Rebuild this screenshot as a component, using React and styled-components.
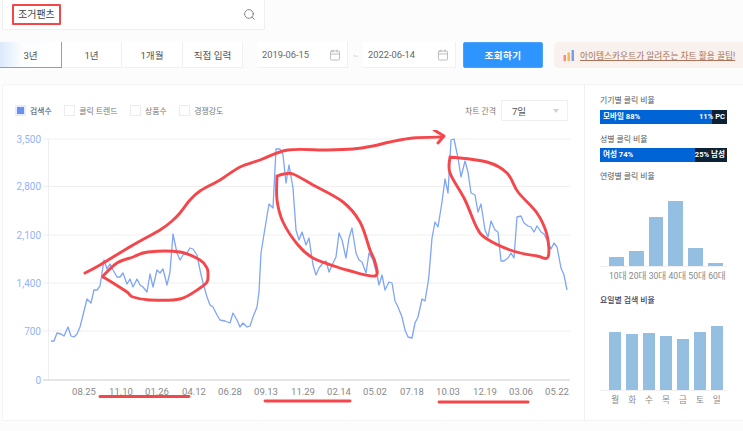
import styled, { createGlobalStyle } from "styled-components";
import { Search, Calendar } from "lucide-react";

const FONT = `Roboto, "Noto Sans CJK KR", sans-serif`;

// page coordinates of the trend line, traced week by week
const TREND = "51,341 54,341 57,333 61,334 64,336 68,327 71,336 74,337 77,334 80,327 83,315 87,299 91,303 94,290 97,290 100,286 102,273 104,260 107,269 110,264 113,270 117,277 120,277 123,273 127,284 130,279 133,287 137,279 140,285 143,287 147,292 150,274 153,287 157,270 160,273 163,269 167,285 170,272 173,234 177,253 180,260 183,255 187,253 190,248 193,249 197,255 200,270 203,283 207,297 210,305 213,307 217,315 220,320 225,321 230,323 233,313 237,320 240,327 243,323 247,327 250,326 253,317 257,307 259,292 261,253 265,228 269,204 273,208 276,149 280,149 283,155 286,183 289,165 293,188 296,230 299,240 302,232 306,245 309,238 313,265 316,275 319,268 323,263 326,261 329,272 333,263 336,257 339,233 342,240 346,258 349,238 352,228 356,253 359,260 362,262 366,273 369,253 373,260 377,275 379,285 382,275 385,290 389,282 392,283 395,301 398,307 402,317 405,330 408,337 412,338 415,323 418,317 422,299 425,301 428,283 429,275 432,238 435,222 438,227 442,202 445,179 448,193 451,140 454,139 458,158 461,177 465,161 468,172 471,193 475,195 478,212 481,204 485,230 488,237 491,221 495,230 498,232 501,261 504,261 508,258 511,253 514,258 517,217 521,216 524,223 528,226 531,227 534,232 537,226 541,232 544,234 547,240 551,249 554,243 557,247 561,268 564,275 567,290";

// the red pen marks over the chart
const CURVES = [
  [[85, 273], [100, 265], [133, 245], [160, 230], [172, 221], [180, 213], [190, 200], [200, 191], [220, 180], [240, 167], [260, 160], [288, 150], [327, 150], [353, 149], [373, 146], [390, 142], [413, 138], [443, 137]],
  [[103, 276], [117, 263], [133, 257], [148, 252], [180, 252], [200, 260], [207, 268], [208, 275], [207, 282], [200, 288], [180, 299], [150, 300], [133, 297], [127, 292], [113, 283], [103, 277]],
  [[277, 176], [284, 174], [293, 174], [313, 185], [343, 202], [360, 222], [370, 250], [375, 262], [375, 276], [347, 270], [337, 267], [313, 258], [298, 245], [283, 222], [277, 200], [277, 176]],
  [[450, 157], [487, 162], [507, 173], [518, 192], [537, 213], [547, 235], [548, 257], [537, 256], [513, 251], [487, 239], [477, 228], [465, 200], [450, 173], [450, 157]],
];

const STROKES = [
  "M434 130 L444 136 L438 143",
  "M100 396.5 H189",
  "M265 401 H350",
  "M439 402 H528",
];

const smooth = (pts) => {
  let d = `M${pts[0][0]} ${pts[0][1]}`;
  for (let i = 0; i < pts.length - 1; i++) {
    const a = pts[i - 1] || pts[i];
    const b = pts[i];
    const c = pts[i + 1];
    const e = pts[i + 2] || c;
    d += ` C${b[0] + (c[0] - a[0]) / 6} ${b[1] + (c[1] - a[1]) / 6} ${c[0] - (e[0] - b[0]) / 6} ${c[1] - (e[1] - b[1]) / 6} ${c[0]} ${c[1]}`;
  }
  return d;
};

const Y_TICKS = [
  { label: "3,500", y: 139 },
  { label: "2,800", y: 186.5 },
  { label: "2,100", y: 235 },
  { label: "1,400", y: 283 },
  { label: "700", y: 331 },
];

const X_TICKS = [
  ["08.25", 84], ["11.10", 121], ["01.26", 157], ["04.12", 194], ["06.28", 230],
  ["09.13", 266], ["11.29", 303], ["02.14", 339], ["05.02", 375], ["07.18", 412],
  ["10.03", 448], ["12.19", 485], ["03.06", 521], ["05.22", 557],
];

const AGES = [
  { label: "10대", value: 9 }, { label: "20대", value: 15 }, { label: "30대", value: 49 },
  { label: "40대", value: 65 }, { label: "50대", value: 18 }, { label: "60대", value: 3 },
];

const DAYS = [
  { label: "월", value: 58 }, { label: "화", value: 56 }, { label: "수", value: 57 }, { label: "목", value: 54 },
  { label: "금", value: 51 }, { label: "토", value: 58 }, { label: "일", value: 64 },
];

const TABS = ["3년", "1년", "1개월", "직접 입력"];
const LEGEND = ["검색수", "클릭 트렌드", "상품수", "경쟁강도"];

const App = () => {
  return (
    <Page>
      <GlobalStyle />

      <SearchBox>
        <Keyword>조거팬츠</Keyword>
        <Search size={13} color="#777" strokeWidth={1.6} />
      </SearchBox>

      <Controls>
        <Tabs>
          {TABS.map((t, i) => (
            <Tab key={t} $active={i === 0}>{t}</Tab>
          ))}
        </Tabs>
        <DateRange>
          <DateBox $width={91}>
            2019-06-15
            <Calendar size={12} color="#aaa" strokeWidth={1.5} />
          </DateBox>
          <Dash>~</Dash>
          <DateBox $width={93}>
            2022-06-14
            <Calendar size={12} color="#aaa" strokeWidth={1.5} />
          </DateBox>
        </DateRange>
        <SubmitButton>조회하기</SubmitButton>
        <TipBox>
          <svg width="12" height="11" viewBox="0 0 12 11">
            <rect x="0.5" y="5" width="2.5" height="6" fill="#f98b84" />
            <rect x="4.5" y="2.5" width="2.5" height="8.5" fill="#f6bb4a" />
            <rect x="8.5" y="0" width="2.5" height="11" fill="#7b9cf6" />
          </svg>
          <TipLink>아이템스카우트가 알려주는 차트 활용 꿀팁!</TipLink>
        </TipBox>
      </Controls>

      <Card>
        <ChartColumn>
          <LegendRow>
            {LEGEND.map((l, i) => (
              <LegendItem key={l} $active={i === 0}>
                <CheckBox $active={i === 0} />
                {l}
              </LegendItem>
            ))}
            <IntervalLabel>차트 간격</IntervalLabel>
            <Select>
              7일
              <Caret />
            </Select>
          </LegendRow>

          <ChartSvg viewBox="3 130 581 291" width="581" height="291">
            {Y_TICKS.map((t) => (
              <g key={t.label}>
                <line x1="43" x2="570" y1={t.y} y2={t.y} stroke="#efefef" />
                <YLabel x="41" y={t.y + 3.5}>{t.label}</YLabel>
              </g>
            ))}
            <line x1="48.5" x2="48.5" y1="139" y2="380" stroke="#eeeeee" />
            <line x1="43" x2="570" y1="380" y2="380" stroke="#cccccc" />
            <YLabel x="41" y="383.5">0</YLabel>
            {X_TICKS.map(([label, x]) => (
              <XLabel key={label} x={x} y="394.5">{label}</XLabel>
            ))}
            <polyline points={TREND} fill="none" stroke="#7fa5f6" strokeWidth="1.3" strokeLinejoin="round" />
            {CURVES.map((pts) => (
              <RedPen key={pts[0].join()} d={smooth(pts)} />
            ))}
            {STROKES.map((d) => (
              <RedPen key={d} d={d} />
            ))}
          </ChartSvg>
        </ChartColumn>

        <SidePanel>
          <PanelTitle>기기별 클릭 비율</PanelTitle>
          <RatioBar>
            <RatioMain>모바일 88%</RatioMain>
            <RatioRest $width={15}>11% PC</RatioRest>
          </RatioBar>

          <PanelTitle $gap={10}>성별 클릭 비율</PanelTitle>
          <RatioBar>
            <RatioMain>여성 74%</RatioMain>
            <RatioRest $width={32}>25% 남성</RatioRest>
          </RatioBar>

          <PanelTitle $gap={9}>연령별 클릭 비율</PanelTitle>
          <MiniBars data={AGES} colGap={5} />

          <PanelTitle $gap={13} $strong>요일별 검색 비율</PanelTitle>
          <MiniBars data={DAYS} colGap={4.5} />
        </SidePanel>
      </Card>
    </Page>
  );
};

const MiniBars = ({ data, colGap }) => (
  <>
    <BarRow $count={data.length} $gap={colGap}>
      {data.map((d) => (
        <Bar key={d.label} $value={d.value} />
      ))}
    </BarRow>
    <BarLabels $count={data.length} $gap={colGap}>
      {data.map((d) => (
        <span key={d.label}>{d.label}</span>
      ))}
    </BarLabels>
  </>
);

export default App;

const GlobalStyle = createGlobalStyle`
  body {
    margin: 0;
    background: #fcfcfc;
    font-family: ${FONT};
  }
`;

const Page = styled.div`
  width: 743px;
  height: 431px;
  overflow: hidden;
`;

const SearchBox = styled.div`
  width: 263px;
  height: 30px;
  margin-left: 2px;
  padding: 0 8px 0 9px;
  box-sizing: border-box;
  display: flex;
  align-items: center;
  justify-content: space-between;
  background: #fff;
  border: 1px solid #f0f0f0;
  border-top: none;
`;

const Keyword = styled.span`
  padding: 2px 4px;
  border: 2px solid #f4474a;
  border-radius: 1px;
  font-size: 10px;
  line-height: 13px;
  color: #444;
`;

const Controls = styled.div`
  display: flex;
  height: 26px;
  margin-top: 12px;
  align-items: stretch;
`;

const Tabs = styled.div`
  display: grid;
  grid-template-columns: 62px 60px 61px 60px;
  width: 243px;
  background: #fff;
`;

const Tab = styled.div`
  display: flex;
  align-items: center;
  justify-content: center;
  font-size: 9.6px;
  color: #555;
  box-sizing: border-box;
  border-right: 1px solid ${(p) => (p.$active ? "#6ea4ea" : "#f0f0f0")};
  border-bottom: 1px solid ${(p) => (p.$active ? "#6ea4ea" : "#f0f0f0")};
  background: ${(p) => (p.$active ? "linear-gradient(90deg, #dbe9fb, #fbfdff 35%, #fff)" : "#fff")};
`;

const DateRange = styled.div`
  display: flex;
  margin-left: 14px;
`;

const DateBox = styled.div`
  display: flex;
  align-items: center;
  justify-content: space-between;
  box-sizing: border-box;
  width: ${(p) => p.$width}px;
  padding: 0 6px 0 5px;
  font-size: 9.3px;
  color: #666;
  background: #fff;
  border-right: 1px solid #f0f0f0;
  border-bottom: 1px solid #f0f0f0;
`;

const Dash = styled.div`
  width: 15px;
  display: flex;
  align-items: center;
  justify-content: center;
  font-size: 8px;
  color: #ccc;
`;

const SubmitButton = styled.button`
  width: 80px;
  margin-left: 7px;
  padding: 0;
  border: 1px solid #4aa2fb;
  border-radius: 2px;
  background: #2e95ff;
  color: #fff;
  font-family: ${FONT};
  font-size: 9.6px;
  font-weight: 700;
  letter-spacing: 0.4px;
`;

const TipBox = styled.div`
  flex: 1;
  margin-left: 11px;
  padding-left: 9px;
  display: flex;
  align-items: center;
  gap: 5px;
  background: #f8f1ed;
  border-radius: 5px 0 0 5px;
`;

const TipLink = styled.span`
  font-size: 8.72px;
  color: #a9745a;
  text-decoration: underline;
`;

const Card = styled.div`
  display: flex;
  height: 337px;
  margin: 16px 0 0 2px;
  background: #fff;
  border: 1px solid #f4f4f4;
  border-right: none;
  border-radius: 4px 0 0 0;
  box-sizing: border-box;
`;

const ChartColumn = styled.div`
  width: 581px;
  flex: none;
`;

const LegendRow = styled.div`
  display: flex;
  align-items: center;
  height: 21px;
  margin-top: 15px;
  padding: 0 16px 0 12px;
`;

const LegendItem = styled.div`
  display: flex;
  align-items: center;
  gap: 4px;
  margin-right: 12.5px;
  font-size: 7.9px;
  color: ${(p) => (p.$active ? "#444" : "#777")};
`;

const CheckBox = styled.span`
  width: 11px;
  height: 11px;
  box-sizing: border-box;
  border: ${(p) => (p.$active ? "2.5px solid #e6ecfb" : "1px solid #ececec")};
  background: ${(p) => (p.$active ? "#6b8ff2" : "#fff")};
`;

const IntervalLabel = styled.span`
  margin-left: auto;
  margin-right: 5px;
  font-size: 7.9px;
  color: #777;
`;

const Select = styled.div`
  position: relative;
  width: 67px;
  height: 21px;
  box-sizing: border-box;
  padding-left: 10px;
  display: flex;
  align-items: center;
  font-size: 9.5px;
  color: #555;
  border: 1px solid #efefef;
`;

const Caret = styled.span`
  position: absolute;
  right: 8px;
  top: 8px;
  border-left: 3.5px solid transparent;
  border-right: 3.5px solid transparent;
  border-top: 4px solid #ccd1da;
`;

const ChartSvg = styled.svg`
  display: block;
  margin-top: 9px;
`;

const YLabel = styled.text`
  font-family: ${FONT};
  font-size: 10px;
  fill: #94b3fb;
  text-anchor: end;
`;

const XLabel = styled.text`
  font-family: ${FONT};
  font-size: 9.5px;
  fill: #888;
  text-anchor: middle;
`;

const RedPen = styled.path`
  fill: none;
  stroke: #f5474b;
  stroke-width: 2.9;
  stroke-linejoin: round;
  stroke-linecap: round;
`;

const SidePanel = styled.aside`
  flex: 1;
  min-width: 0;
  box-sizing: border-box;
  padding: 10px 16px 0 15px;
  border-left: 1px solid #f0f0f0;
`;

const PanelTitle = styled.div`
  height: 12px;
  margin-top: ${(p) => p.$gap || 0}px;
  font-size: 7.9px;
  font-weight: ${(p) => (p.$strong ? 500 : 400)};
  line-height: 12px;
  color: ${(p) => (p.$strong ? "#445" : "#555")};
`;

const RatioBar = styled.div`
  display: flex;
  justify-content: space-between;
  height: 14px;
  margin-top: 2.5px;
  background: #0064d6;
  font-size: 7.6px;
  font-weight: 700;
  line-height: 13px;
  color: #fff;
`;

const RatioMain = styled.span`
  padding-left: 3px;
`;

const RatioRest = styled.span`
  display: flex;
  justify-content: flex-end;
  width: ${(p) => p.$width}px;
  padding-right: 2px;
  box-sizing: border-box;
  background: #0c2136;
  white-space: nowrap;
`;

const BarRow = styled.div`
  display: grid;
  grid-template-columns: repeat(${(p) => p.$count}, minmax(0, 1fr));
  column-gap: ${(p) => p.$gap}px;
  align-items: end;
  height: 83px;
  padding: 0 4px 0 9px;
  border-bottom: 1px solid #f0f0f0;
`;

const Bar = styled.div`
  height: ${(p) => p.$value}px;
  background: #94bfe0;
`;

const BarLabels = styled.div`
  display: grid;
  grid-template-columns: repeat(${(p) => p.$count}, minmax(0, 1fr));
  column-gap: ${(p) => p.$gap}px;
  padding: 3px 4px 0 9px;
  font-size: 8.6px;
  line-height: 12px;
  color: #888;
  text-align: center;
  white-space: nowrap;
`;
